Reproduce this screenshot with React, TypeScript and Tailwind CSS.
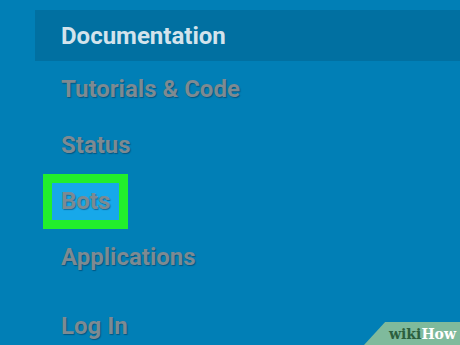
const items = ['Tutorials & Code', 'Status'];

const grey = 'text-[#7d8a92] [text-shadow:1px_1px_1px_rgba(0,40,70,0.45)]';

export default function App() {
  return (
    <div className="relative w-[460px] h-[345px] overflow-hidden bg-[#017fb6] font-['Roboto',sans-serif] font-bold text-[24px]">
      <div className="pt-[10px]">
        {/* bandeau actif */}
        <div className="ml-[35px] h-[51px] flex items-center pl-[26px] bg-[#0170a1] text-[#d3e3ec]">
          Documentation
        </div>
        {items.map(label => (
          <div key={label} className={`h-[56px] flex items-center pl-[61px] ${grey}`}>
            {label}
          </div>
        ))}
        <div className="h-[56px] flex items-center pl-[43px]">
          <span className={`h-[55px] w-[85px] flex items-center pl-[9px] border-[9px] border-[#22ef2c] bg-[#17a8ea] ${grey}`}>
            Bots
          </span>
        </div>
        <div className={`h-[56px] flex items-center pl-[61px] ${grey}`}>Applications</div>
        <div className={`mt-[13px] h-[56px] flex items-center pl-[61px] ${grey}`}>Log In</div>
      </div>

      {/* badge wikiHow */}
      <div className="absolute right-0 bottom-0 w-[96px] h-[23px] bg-[#7fba9c] [clip-path:polygon(22%_0,100%_0,100%_100%,0_100%)] flex items-center justify-end pr-[4px] font-['DejaVu_Serif',serif] font-bold text-[14px] leading-none">
        <span className="text-[#2c5f3e]">wiki</span>
        <span className="text-white">How</span>
      </div>
    </div>
  );
}
